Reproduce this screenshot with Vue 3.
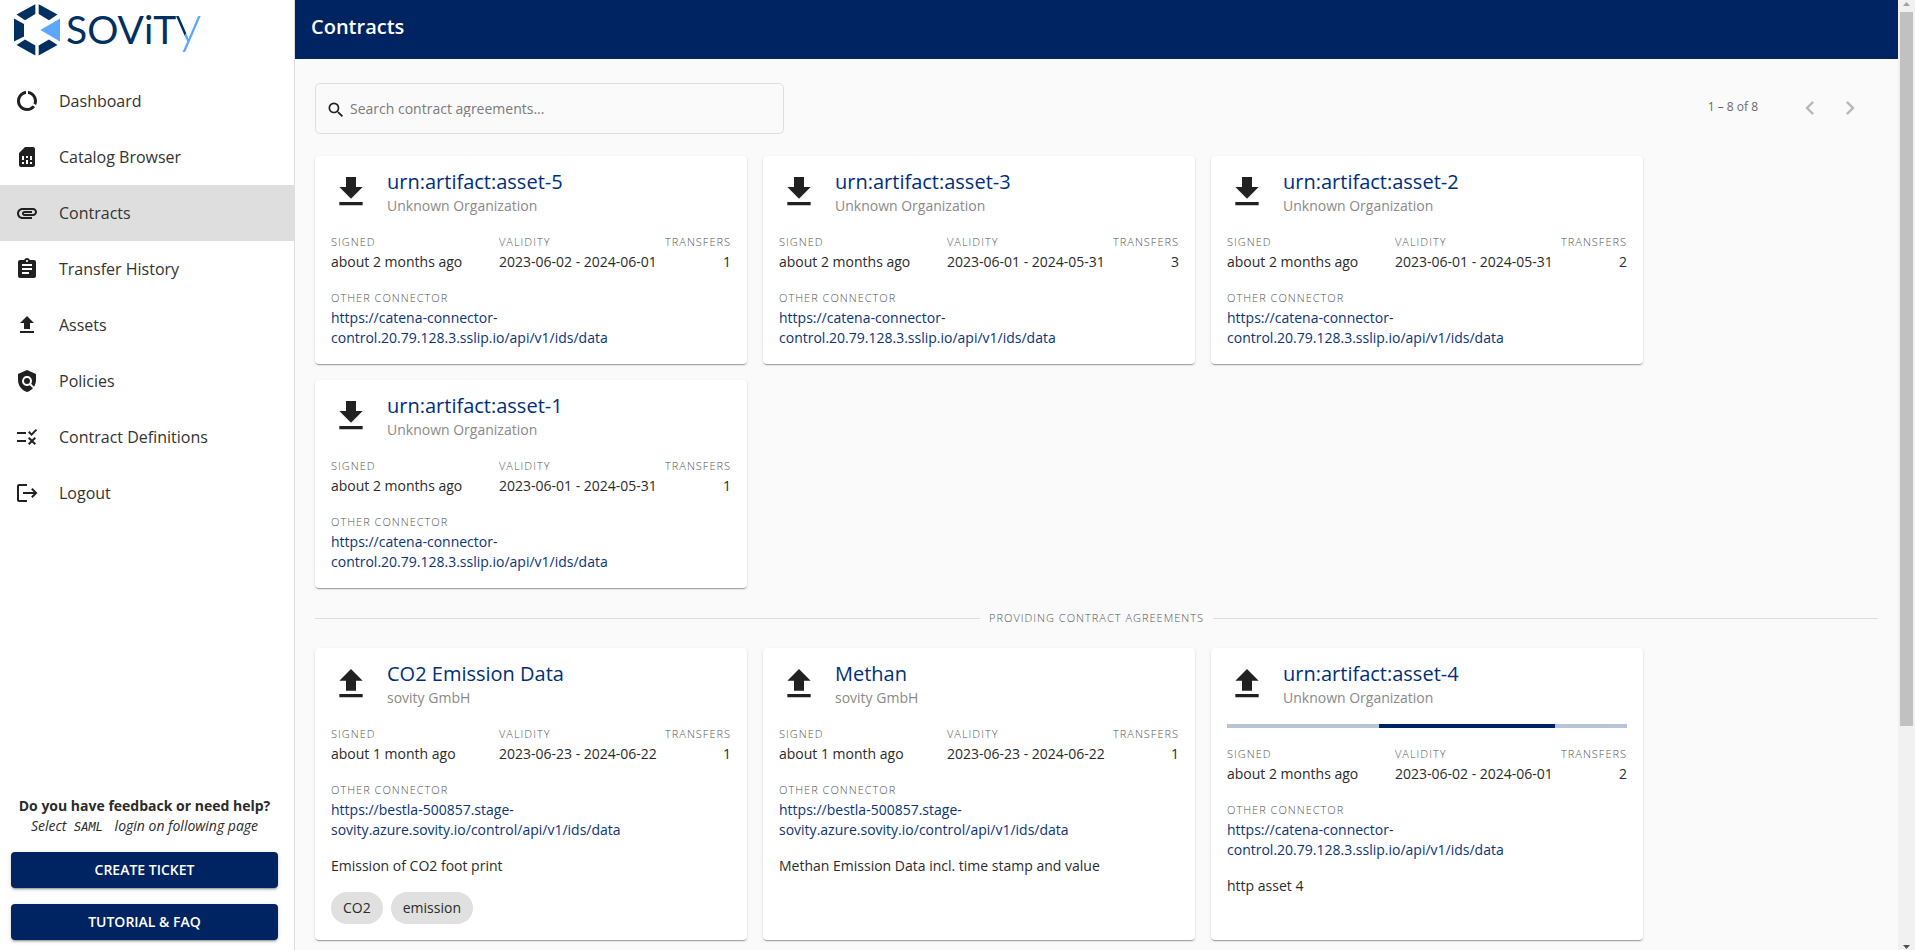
<script setup>
const nav = [
  { label: 'Dashboard', d: 'M13 2.05v3.03c3.39.49 6 3.39 6 6.92 0 .9-.18 1.75-.48 2.54l2.6 1.53c.56-1.24.88-2.62.88-4.07 0-5.18-3.95-9.45-9-9.95zM12 19c-3.87 0-7-3.13-7-7 0-3.53 2.61-6.43 6-6.92V2.05c-5.06.5-9 4.76-9 9.95 0 5.52 4.47 10 9.99 10 3.31 0 6.24-1.61 8.06-4.09l-2.6-1.53C16.17 17.98 14.21 19 12 19z' },
  { label: 'Catalog Browser', d: 'M19.99 4c0-1.1-.89-2-1.99-2h-8L4 8v12c0 1.1.9 2 2 2h12.01c1.1 0 1.99-.9 1.99-2l-.01-16zM9 19H7v-2h2v2zm8 0h-2v-2h2v2zm-8-4H7v-4h2v4zm4 4h-2v-4h2v4zm0-6h-2v-2h2v2zm4 2h-2v-4h2v4z' },
  { label: 'Contracts', active: true, d: 'M2 12.5C2 9.46 4.46 7 7.5 7H18c2.21 0 4 1.79 4 4s-1.79 4-4 4H9.5C8.12 15 7 13.88 7 12.5S8.12 10 9.5 10H17v2H9.41c-.55 0-.55 1 0 1H18c1.1 0 2-.9 2-2s-.9-2-2-2H7.5C5.57 9 4 10.57 4 12.5S5.57 16 7.5 16H17v2H7.5C4.46 18 2 15.54 2 12.5z' },
  { label: 'Transfer History', d: 'M19 3h-4.18C14.4 1.84 13.3 1 12 1c-1.3 0-2.4.84-2.82 2H5c-1.1 0-2 .9-2 2v14c0 1.1.9 2 2 2h14c1.1 0 2-.9 2-2V5c0-1.1-.9-2-2-2zm-7 0c.55 0 1 .45 1 1s-.45 1-1 1-1-.45-1-1 .45-1 1-1zm2 14H7v-2h7v2zm3-4H7v-2h10v2zm0-4H7V7h10v2z' },
  { label: 'Assets', d: 'M5 20h14v-2H5v2zM5 10h4v6h6v-6h4l-7-7-7 7z' },
  { label: 'Policies', d: 'M21 5l-9-4-9 4v6c0 5.55 3.84 10.74 9 12 2.3-.56 4.33-1.9 5.88-3.71l-3.12-3.12c-1.94 1.29-4.58 1.07-6.29-.64-1.95-1.95-1.95-5.12 0-7.07 1.95-1.95 5.12-1.95 7.07 0 1.71 1.71 1.92 4.35.64 6.29l2.9 2.9C20.29 15.69 21 13.38 21 11V5zM12 9a3 3 0 1 0 0 6a3 3 0 1 0 0-6z' },
  { label: 'Contract Definitions', d: 'M16.54 11L13 7.46l1.41-1.41 2.12 2.12 4.24-4.24 1.41 1.41L16.54 11zM11 7H2v2h9V7zM21 13.41L19.59 12 17 14.59 14.41 12 13 13.41 15.59 16 13 18.59 14.41 20 17 17.41 19.59 20 21 18.59 18.41 16 21 13.41zM11 15H2v2h9v-2z' },
  { label: 'Logout', d: 'M12 3v2H4v14h8v2H4c-1.1 0-2-.9-2-2V5c0-1.1.9-2 2-2zM17.5 7l-1.4 1.4 2.6 2.6H8v2h10.7l-2.6 2.6 1.4 1.4 5-5z' },
]

const download = 'M19 9h-4V3H9v6H5l7 7 7-7zM5 18v2h14v-2H5z'
const upload = 'M5 20h14v-2H5v2zM5 10h4v6h6v-6h4l-7-7-7 7z'
const catena = 'https://catena-connector-control.20.79.128.3.sslip.io/api/v1/ids/data'
const bestla = 'https://bestla-500857.stage-sovity.azure.sovity.io/control/api/v1/ids/data'

const consuming = [
  { title: 'urn:artifact:asset-5', validity: '2023-06-02 - 2024-06-01', transfers: 1 },
  { title: 'urn:artifact:asset-3', validity: '2023-06-01 - 2024-05-31', transfers: 3 },
  { title: 'urn:artifact:asset-2', validity: '2023-06-01 - 2024-05-31', transfers: 2 },
  { title: 'urn:artifact:asset-1', validity: '2023-06-01 - 2024-05-31', transfers: 1 },
].map((c) => ({ ...c, org: 'Unknown Organization', signed: 'about 2 months ago', url: catena, icon: download }))

const providing = [
  { title: 'CO2 Emission Data', org: 'sovity GmbH', signed: 'about 1 month ago', validity: '2023-06-23 - 2024-06-22', transfers: 1, url: bestla, text: 'Emission of CO2 foot print', tags: ['CO2', 'emission'] },
  { title: 'Methan', org: 'sovity GmbH', signed: 'about 1 month ago', validity: '2023-06-23 - 2024-06-22', transfers: 1, url: bestla, text: 'Methan Emission Data incl. time stamp and value' },
  { title: 'urn:artifact:asset-4', org: 'Unknown Organization', signed: 'about 2 months ago', validity: '2023-06-02 - 2024-06-01', transfers: 2, url: catena, text: 'http asset 4', busy: true },
].map((c) => ({ ...c, icon: upload }))

const groups = [
  { cards: consuming },
  { heading: 'Providing Contract Agreements', cards: providing },
]
</script>

<template>
  <div class="shell">
    <aside class="sidebar">
      <svg class="logo" viewBox="0 0 220 60" role="img" aria-label="sovity">
        <defs>
          <linearGradient id="logo-y" gradientUnits="userSpaceOnUse" x1="185" y1="35" x2="189" y2="37">
            <stop offset="0" stop-color="#00305f" />
            <stop offset="0" stop-color="#5ca8ff" />
          </linearGradient>
        </defs>
        <g fill="#00305f">
          <path d="M16.5 14.5 35.3 4.3V14L25 20.3z" />
          <path d="M57.5 14.5 38.7 4.3V14L49 20.3z" />
          <path d="M14 18.5 24 24v12.5L14 41.5z" />
          <path d="M16.5 45 25 39.5 35.3 45.5V55.5z" />
          <path d="M57.5 45 49 39.5 38.7 45.5V55.5z" />
        </g>
        <path d="M60 18.5v23L40.3 30z" fill="#5ca8ff" />
        <text class="wordmark" x="66" y="44">SOViT<tspan class="tail" x="175" y="43">y</tspan></text>
      </svg>
      <nav class="nav">
        <a v-for="item in nav" :key="item.label" href="#" class="nav-item" :class="{ active: item.active }">
          <svg class="icon" viewBox="0 0 24 24" aria-hidden="true"><path :d="item.d" /></svg>
          <span>{{ item.label }}</span>
        </a>
      </nav>
      <div class="help">
        <div class="help-title">Do you have feedback or need help?</div>
        <div class="help-hint">Select <code>SAML</code> login on following page</div>
        <button type="button" class="cta">CREATE TICKET</button>
        <button type="button" class="cta">TUTORIAL &amp; FAQ</button>
      </div>
    </aside>

    <main class="main">
      <header class="topbar"><h1>Contracts</h1></header>
      <div class="content">
        <div class="toolbar">
          <label class="search">
            <svg class="search-icon" viewBox="0 0 24 24" aria-hidden="true"><path d="M15.5 14h-.79l-.28-.27A6.471 6.471 0 0 0 16 9.5 6.5 6.5 0 1 0 9.5 16c1.61 0 3.09-.59 4.23-1.57l.27.28v.79l5 4.99L20.49 19l-4.99-5zm-6 0C7.01 14 5 11.99 5 9.5S7.01 5 9.5 5 14 7.01 14 9.5 11.99 14 9.5 14z" /></svg>
            <input type="text" placeholder="Search contract agreements..." aria-label="Search contract agreements" />
          </label>
          <div class="pager">
            <span class="range">1 – 8 of 8</span>
            <button type="button" aria-label="Previous page" disabled>
              <svg viewBox="0 0 24 24"><path d="M15.41 7.41 14 6l-6 6 6 6 1.41-1.41L10.83 12z" /></svg>
            </button>
            <button type="button" aria-label="Next page" disabled>
              <svg viewBox="0 0 24 24"><path d="M10 6 8.59 7.41 13.17 12l-4.58 4.59L10 18l6-6z" /></svg>
            </button>
          </div>
        </div>

        <section v-for="(group, i) in groups" :key="i">
          <div v-if="group.heading" class="divider"><span>{{ group.heading }}</span></div>
          <div class="cards">
            <article v-for="card in group.cards" :key="card.title" class="card">
              <div class="card-head">
                <svg class="card-icon" viewBox="0 0 24 24" aria-hidden="true"><path :d="card.icon" /></svg>
                <div>
                  <h2>{{ card.title }}</h2>
                  <div class="org">{{ card.org }}</div>
                </div>
              </div>
              <div v-if="card.busy" class="progress" role="progressbar" aria-label="Transfer in progress"><div class="bar"></div></div>
              <div class="facts">
                <div><div class="label">Signed</div><div>{{ card.signed }}</div></div>
                <div><div class="label">Validity</div><div>{{ card.validity }}</div></div>
                <div class="right"><div class="label">Transfers</div><div>{{ card.transfers }}</div></div>
              </div>
              <div>
                <div class="label">Other Connector</div>
                <a href="#" class="url">{{ card.url }}</a>
              </div>
              <div v-if="card.text">{{ card.text }}</div>
              <div v-if="card.tags" class="tags">
                <span v-for="tag in card.tags" :key="tag" class="tag">{{ tag }}</span>
              </div>
            </article>
          </div>
        </section>
      </div>
    </main>

    <div class="scrollbar" aria-hidden="true">
      <svg viewBox="0 0 7 4"><path d="M0 4 3.5 0 7 4z" fill="#a3a3a3" /></svg>
      <div class="track"><div class="thumb"></div></div>
      <svg viewBox="0 0 7 4"><path d="M0 0h7L3.5 4z" fill="#505050" /></svg>
    </div>
  </div>
</template>

<style>
body {
  margin: 0;
}
</style>

<style scoped>
* {
  box-sizing: border-box;
}
.shell {
  display: flex;
  height: 100vh;
  overflow: hidden;
  background: #fafafa;
  color: #2b2b2b;
  font: 400 14px/20px "Open Sans", "Noto Sans", sans-serif;
}
a {
  color: inherit;
  text-decoration: none;
}
button {
  font: inherit;
  border: 0;
  padding: 0;
}
svg {
  display: block;
  fill: #212121;
}

.sidebar {
  flex: none;
  width: 295px;
  display: flex;
  flex-direction: column;
  background: #fff;
  border-right: 1px solid #dedede;
}
.logo {
  width: 220px;
  height: 60px;
  margin-bottom: 13px;
}
.wordmark {
  font-family: Lato, sans-serif;
  font-size: 39px;
  fill: #00305f;
}
.tail {
  font-size: 53px;
  font-weight: 300;
  fill: url(#logo-y);
}
.nav-item {
  display: flex;
  align-items: center;
  gap: 20px;
  height: 56px;
  padding: 0 15px;
  font-size: 16px;
  color: #333;
}
.nav-item.active {
  background: #dedede;
}
.icon {
  width: 24px;
  height: 24px;
}
.help {
  margin-top: auto;
  padding: 0 16px 10px 11px;
  text-align: center;
}
.help-title {
  font-weight: 700;
}
.help-hint {
  font-style: italic;
}
.help-hint code {
  padding: 0 8px 0 4px;
  font-family: "DejaVu Sans Mono", monospace;
  font-size: 12px;
  line-height: 16px;
}
.cta {
  display: block;
  width: 100%;
  height: 36px;
  margin-top: 16px;
  border-radius: 4px;
  background: #002462;
  color: #fff;
  font-weight: 600;
  box-shadow: 0 3px 1px -2px rgba(0, 0, 0, .2), 0 2px 2px rgba(0, 0, 0, .14), 0 1px 5px rgba(0, 0, 0, .12);
}

.main {
  flex: 1;
  min-width: 0;
  overflow: hidden;
}
.topbar {
  display: flex;
  align-items: center;
  height: 59px;
  padding: 0 16px 6px;
  background: #002462;
  color: #fff;
}
h1 {
  margin: 0;
  font-size: 20px;
  line-height: 32px;
  font-weight: 600;
}
.content {
  padding: 24px 20px;
}
.toolbar {
  display: flex;
  align-items: center;
  justify-content: space-between;
  margin-bottom: 22px;
}
.search {
  display: flex;
  align-items: center;
  gap: 4px;
  width: 30%;
  height: 51px;
  padding: 0 10px;
  border: 1px solid #dedede;
  border-radius: 5px;
}
.search-icon {
  flex: none;
  width: 20px;
  height: 20px;
  margin-top: 2px;
}
.search input {
  flex: 1;
  min-width: 0;
  height: 16px;
  padding: 0;
  border: 0;
  outline: 0;
  background: transparent;
  color: #212121;
  font: inherit;
  line-height: 16px;
}
.search input::placeholder {
  color: #7b7b7b;
  opacity: 1;
}
.pager {
  display: flex;
  align-items: center;
  padding: 0 8px 2px 0;
}
.range {
  margin-right: 32px;
  padding-bottom: 2px;
  font-size: 12px;
  color: #6a6a6a;
}
.pager button {
  display: grid;
  place-items: center;
  width: 40px;
  height: 40px;
  background: transparent;
}
.pager svg {
  width: 28px;
  height: 28px;
  fill: #b8b8b8;
}

.cards {
  display: grid;
  grid-template-columns: repeat(auto-fill, 432px);
  gap: 16px;
}
.card {
  display: flex;
  flex-direction: column;
  gap: 16px;
  padding: 16px;
  border-radius: 4px;
  background: #fff;
  box-shadow: 0 2px 1px -1px rgba(0, 0, 0, .2), 0 1px 1px rgba(0, 0, 0, .14), 0 1px 3px rgba(0, 0, 0, .12);
}
.card-head {
  display: flex;
  gap: 16px;
}
.card-icon {
  width: 40px;
  height: 40px;
}
h2 {
  margin: 0 0 4px;
  font-size: 20px;
  line-height: 20px;
  font-weight: 400;
  color: #002f7a;
}
.org {
  color: #8a8a8a;
}
.progress {
  height: 4px;
  background: #b9c5d5;
}
.bar {
  width: 44%;
  height: 100%;
  margin-left: 38%;
  background: #002462;
}
.facts {
  display: grid;
  grid-template-columns: 168px 1fr auto;
}
.right {
  text-align: right;
}
.label,
.divider {
  font-size: 11px;
  font-weight: 300;
  letter-spacing: 1px;
  text-transform: uppercase;
  color: #555;
}
.url {
  display: block;
  width: 300px;
  color: #0b3479;
}
.tags {
  display: flex;
  gap: 8px;
}
.tag {
  padding: 6px 12px;
  border-radius: 16px;
  background: #e0e0e0;
}
.divider {
  display: flex;
  align-items: center;
  gap: 9px;
  margin: 20px 0;
}
.divider::before,
.divider::after {
  content: "";
  flex: 1;
  height: 1px;
  background: #dedede;
}

.scrollbar {
  flex: none;
  width: 17px;
  display: flex;
  flex-direction: column;
  align-items: center;
  gap: 6px;
  padding: 2px 0 1px;
  background: #f1f1f1;
}
.scrollbar svg {
  flex: none;
  width: 7px;
  height: 4px;
}
.track {
  flex: 1;
  width: 13px;
}
.thumb {
  height: 77%;
  background: #c1c1c1;
}
</style>
